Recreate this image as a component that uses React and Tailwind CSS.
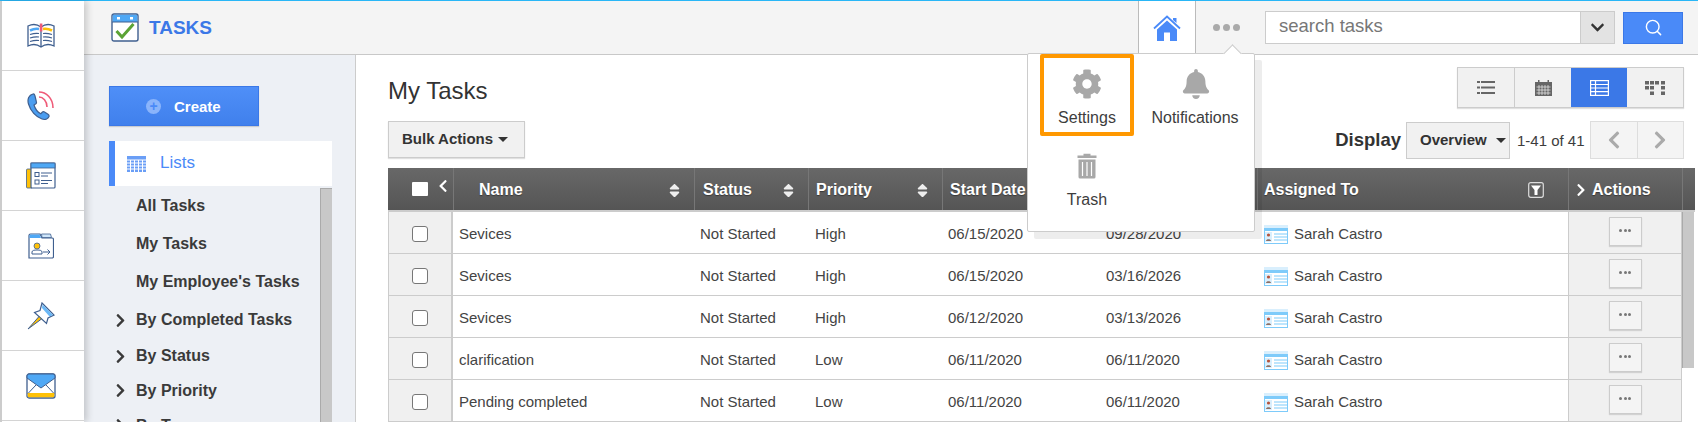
import { FaCog, FaBell, FaChevronDown, FaChevronRight, FaChevronLeft, FaSort } from "react-icons/fa";
import { Search } from "lucide-react";

const navy = "#3f5f8f";
const rowCols = "grid grid-cols-[65px_241px_114px_134px_156px_159px_311px_114px]";
const headCols = "grid grid-cols-[65px_241px_114px_134px_156px_159px_311px_114px_13px]";

const BookIcon = () => (
    <svg width="28" height="25" viewBox="0 0 28 25" fill="none">
        <path d="M14 4C10 1 5 1 1 3V23C5 21 10 21 14 24C18 21 23 21 27 23V3C23 1 18 1 14 4Z" fill="#fff" stroke={navy} strokeWidth="1.3" />
        <path d="M14 4V24" stroke={navy} strokeWidth="1.3" />
        <path d="M3 7.5C6 6 9 5.5 12 6" stroke="#4fa8f5" strokeWidth="2.6" />
        <path d="M16 6C19 5.5 22 6 25 7.5" stroke="#ffc107" strokeWidth="2.6" />
        <path d="M3 11.5C6 10.5 9 10 12 10.5M3 15C6 14 9 13.5 12 14M3 18.5C6 17.5 9 17 12 17.5M16 10.5C19 10 22 10.5 25 11.5M16 14C19 13.5 22 14 25 15M16 17.5C19 17 22 17.5 25 18.5" stroke={navy} strokeWidth="1.2" />
        <rect x="12.8" y="0.5" width="2.6" height="8" fill="#ef5b78" />
    </svg>
);

const PhoneIcon = () => (
    <svg width="28" height="30" viewBox="0 0 28 30" fill="none">
        <path d="M6 3C2 4 0 8 1.5 13C3.5 20 9 26 15 28C18 29 21 28 22 25.5C22.3 24.5 22 24 21 23.3L17.5 21C16.5 20.4 15.8 20.6 15 21.5L13.8 22.8C10.5 21 8 17.5 7 14L8.5 13C9.5 12.3 9.7 11.5 9.3 10.5L8 5C7.6 3.5 7 2.8 6 3Z" fill="#4a9df0" stroke={navy} strokeWidth="1.2" />
        <path d="M12 6C16 6 20 10 20 16" stroke="#ef5b78" strokeWidth="1.6" />
        <path d="M12 1C19 1 26 7 26 17" stroke="#ef5b78" strokeWidth="1.6" />
    </svg>
);

const FormIcon = () => (
    <svg width="30" height="27" viewBox="0 0 30 27" fill="none">
        <rect x="0.5" y="7" width="6" height="19" rx="1" fill="#ffc107" stroke={navy} strokeWidth="0.8" />
        <rect x="5" y="1" width="24" height="25" rx="1" fill="#fff" stroke={navy} strokeWidth="1.2" />
        <rect x="5" y="1" width="24" height="5" fill="#4fa8f5" stroke={navy} strokeWidth="0.8" />
        <rect x="9" y="10.5" width="4" height="4" stroke={navy} strokeWidth="1" />
        <rect x="9" y="18" width="4" height="4" stroke={navy} strokeWidth="1" />
        <path d="M15 11H26M15 14H22M15 18.5H26M15 21.5H22" stroke={navy} strokeWidth="1" />
    </svg>
);

const FolderIcon = () => (
    <svg width="26" height="26" viewBox="0 0 26 26" fill="none">
        <path d="M1 25V2.5A1.5 1.5 0 0 1 2.5 1H12L14 5H24A1.5 1.5 0 0 1 25.5 6.5V23.5A1.5 1.5 0 0 1 24 25Z" fill="#fff" stroke={navy} strokeWidth="1.2" />
        <path d="M1.5 5V2.5A1 1 0 0 1 2.5 1.5H11.5L13 5Z" fill="#4fa8f5" />
        <path d="M14 4.5L13.5 1H22.5L23.5 4.5Z" fill="#cfe6fa" stroke={navy} strokeWidth="0.8" />
        <circle cx="9" cy="13" r="3" fill="#ffc107" stroke={navy} strokeWidth="0.8" />
        <path d="M4 21V19C4 17.5 6 17 9 17C12 17 14 17.5 14 19V21Z" fill="#fff" stroke={navy} strokeWidth="1" />
        <path d="M15 19H22M19.5 16.5L22 19L19.5 21.5" stroke={navy} strokeWidth="1" />
    </svg>
);

const PinIcon = () => (
    <svg width="28" height="28" viewBox="0 0 28 28" fill="none">
        <path d="M15 1L27 13L21 16L19.5 21.5L7.5 10.5L13 8.5Z" fill="#fff" stroke={navy} strokeWidth="1.2" />
        <path d="M15.5 2.5L26 13L22.5 14.5L15 6Z" fill="#6ab8f7" />
        <path d="M1 27L12 14.5L14.5 17Z" fill="#ffc107" stroke={navy} strokeWidth="1" />
    </svg>
);

const MailIcon = () => (
    <svg width="30" height="26" viewBox="0 0 30 26" fill="none">
        <rect x="1" y="1" width="28" height="24" rx="2" fill="#fff" stroke={navy} strokeWidth="1.3" />
        <path d="M1 3A2 2 0 0 1 3 1H27A2 2 0 0 1 29 3V5L15 15L1 5Z" fill="#4fa8f5" stroke={navy} strokeWidth="1" />
        <path d="M1.5 21L10 12M28.5 21L20 12" stroke={navy} strokeWidth="1" />
        <path d="M1.7 20H28.3V23A1.5 1.5 0 0 1 27 24.3H3A1.5 1.5 0 0 1 1.7 23Z" fill="#ffc107" />
    </svg>
);

const TasksIcon = () => (
    <svg width="28" height="29" viewBox="0 0 28 29" fill="none">
        <rect x="1" y="1" width="26" height="27" rx="2" fill="#fff" stroke={navy} strokeWidth="1.4" />
        <path d="M1.7 3A1.3 1.3 0 0 1 3 1.7H25A1.3 1.3 0 0 1 26.3 3V9H1.7Z" fill="#4fa8f5" />
        <path d="M1 9H27" stroke={navy} strokeWidth="1" />
        <rect x="6" y="4" width="3" height="2.5" fill="#fff" />
        <rect x="19" y="4" width="3" height="2.5" fill="#fff" />
        <path d="M5.5 18L11 24L22.5 11" stroke="#5ba335" strokeWidth="3" />
    </svg>
);

const HomeIcon = () => (
    <svg width="28" height="26" viewBox="0 0 28 26" fill="none">
        <path d="M1 13.5L14 1.5L27 13.5" stroke="#4a8af8" strokeWidth="1.8" />
        <path d="M20 3H23.5V8L20 5Z" fill="#4a8af8" />
        <path d="M14 5.5L24 14.5V26H17V17.5H11V26H4V14.5Z" fill="#4a8af8" />
    </svg>
);

const TrashIcon = () => (
    <svg width="20" height="26" viewBox="0 0 20 26">
        <path d="M6.5 2.5V0.8H13.5V2.5H19.5V5H0.5V2.5Z" fill="#a8a8a8" />
        <path d="M1.5 6.5H18.5V24A1.5 1.5 0 0 1 17 25.5H3A1.5 1.5 0 0 1 1.5 24Z" fill="#a8a8a8" />
        <path d="M5.5 9V23M10 9V23M14.5 9V23" stroke="#fff" strokeWidth="1.2" />
    </svg>
);

const ListIcon = () => (
    <svg width="18" height="15" viewBox="0 0 18 15" fill="#666">
        <rect x="0" y="1" width="3" height="2" />
        <rect x="4" y="1" width="14" height="2" />
        <rect x="0" y="6.5" width="3" height="2" />
        <rect x="4" y="6.5" width="14" height="2" />
        <rect x="0" y="12" width="3" height="2" />
        <rect x="4" y="12" width="14" height="2" />
    </svg>
);

const CalendarIcon = () => (
    <svg width="17" height="16" viewBox="0 0 17 16">
        <path d="M0 2H3V0H4.5V2H12.5V0H14V2H17V16H0Z" fill="#666" />
        <path d="M1.5 7H15.5M1.5 10H15.5M1.5 13H15.5M4 5V15M7 5V15M10 5V15M13 5V15" stroke="#f1f1f1" strokeWidth="0.7" />
    </svg>
);

const TableIcon = () => (
    <svg width="19" height="16" viewBox="0 0 19 16" fill="none" stroke="#fff" strokeWidth="1.2">
        <rect x="0.6" y="0.6" width="17.8" height="14.8" />
        <path d="M0.6 4.5H18.4M0.6 8H18.4M0.6 11.7H18.4M5.5 0.6V15.4" />
    </svg>
);

const BlocksIcon = () => (
    <svg width="20" height="14" viewBox="0 0 20 14" fill="#666">
        <rect x="0" y="0" width="4" height="3.5" />
        <rect x="5" y="0" width="4" height="3.5" />
        <rect x="10" y="0" width="4" height="3.5" />
        <rect x="16" y="0" width="4" height="3.5" />
        <rect x="0" y="5" width="4" height="3.5" />
        <rect x="5" y="5" width="4" height="3.5" />
        <rect x="16" y="5" width="4" height="3.5" />
        <rect x="5" y="10.5" width="4" height="3.5" />
        <rect x="16" y="10.5" width="4" height="3.5" />
    </svg>
);

const GridIcon = () => (
    <svg width="19" height="16" viewBox="0 0 19 16">
        <rect width="19" height="16" fill="#6a9ef6" />
        <path d="M0 4H19M0 7H19M0 10H19M0 13H19M3.5 4V16M7.5 4V16M11.5 4V16M15.5 4V16" stroke="#fff" strokeWidth="1" />
    </svg>
);

const CardIcon = () => (
    <svg width="24" height="19" viewBox="0 0 24 19" className="shrink-0">
        <rect width="24" height="3" fill="#d9effd" />
        <rect x="0.5" y="3.5" width="23" height="15" fill="#fff" stroke="#7ecbfa" />
        <rect x="1" y="4" width="22" height="2" fill="#7ecbfa" />
        <rect x="1" y="7" width="7" height="10" fill="#d9effd" />
        <circle cx="4.5" cy="10" r="1.6" fill="#b5533c" />
        <path d="M2 16C2 13.5 7 13.5 7 16Z" fill="#8d6e63" />
        <path d="M10 9H23M10 12H23M10 15H23" stroke="#7ecbfa" strokeWidth="1.2" />
    </svg>
);

const FilterIcon = () => (
    <svg width="16" height="16" viewBox="0 0 16 16">
        <rect x="0.7" y="0.7" width="14.6" height="14.6" rx="2" fill="none" stroke="#ddd" strokeWidth="1.2" />
        <path d="M3 3.5H13L9.5 8V13H6.5V8Z" fill="#fff" />
    </svg>
);

const Caret = ({ className }) => (
    <span className={`inline-block w-0 h-0 border-x-[5px] border-x-transparent border-t-[5px] ${className}`} />
);

const railIcons = [BookIcon, PhoneIcon, FormIcon, FolderIcon, PinIcon, MailIcon];

const sideItems = [
    { label: "All Tasks", h: "h-[38px]" },
    { label: "My Tasks", h: "h-[38px]" },
    { label: "My Employee's Tasks", h: "h-[38px]" },
    { label: "By Completed Tasks", h: "h-[38px]", arrow: true },
    { label: "By Status", h: "h-[34px]", arrow: true },
    { label: "By Priority", h: "h-[35px]", arrow: true },
    { label: "By Type", h: "h-[35px]", arrow: true },
];

const rows = [
    { name: "Sevices", priority: "High", start: "06/15/2020", due: "09/28/2020" },
    { name: "Sevices", priority: "High", start: "06/15/2020", due: "03/16/2026" },
    { name: "Sevices", priority: "High", start: "06/12/2020", due: "03/13/2026" },
    { name: "clarification", priority: "Low", start: "06/11/2020", due: "06/11/2020" },
    { name: "Pending completed", priority: "Low", start: "06/11/2020", due: "06/11/2020" },
];

const headCell = "flex items-center border-l border-[#777] pt-[2px] text-[16px] font-bold text-white [text-shadow:0_1px_1px_rgba(0,0,0,0.4)]";

const App = () => {
    return (
        <div className="relative flex flex-col w-[1698px] h-[422px] overflow-hidden bg-white font-['Liberation_Sans',Arial,sans-serif] text-[#3d3d3d]">
            <div className="h-px shrink-0 bg-[#29b6f6]" />
            <div className="flex flex-1 min-h-0">
                <div className="relative z-10 w-[84px] shrink-0 border-l-2 border-[#ccc] bg-white shadow-[3px_0_7px_rgba(0,0,0,0.18)]">
                    {railIcons.map((Icon, i) => (
                        <div key={i} className="flex h-[70px] items-center justify-center border-b border-[#d4d4d4] pr-1">
                            <Icon />
                        </div>
                    ))}
                </div>

                <div className="flex flex-1 min-w-0 flex-col">
                    <div className="flex h-[54px] shrink-0 items-center border-b border-[#c8c8c8] bg-[#f4f4f4] pl-[27px] pr-[15px]">
                        <TasksIcon />
                        <span className="ml-[10px] pt-[2px] text-[19px] font-bold text-[#3b78e7]">TASKS</span>
                        <div className="ml-auto flex h-full w-[58px] items-center justify-center border-x border-[#bbb] bg-white">
                            <HomeIcon />
                        </div>
                        <div className="flex h-full w-[60px] items-center justify-center gap-[3px]">
                            <span className="h-[7px] w-[7px] rounded-full bg-[#aaa]" />
                            <span className="h-[7px] w-[7px] rounded-full bg-[#aaa]" />
                            <span className="h-[7px] w-[7px] rounded-full bg-[#aaa]" />
                        </div>
                        <div className="ml-[9px] flex h-[33px] w-[350px] border border-[#ccc] bg-white">
                            <div className="flex-1 pl-[13px] text-[18.5px] leading-[27px] text-[#777]">search tasks</div>
                            <div className="flex w-[34px] items-center justify-center border-l border-[#ccc] bg-[#e3e3e3] text-[#333]">
                                <FaChevronDown size={15} />
                            </div>
                        </div>
                        <div className="ml-2 flex h-[32px] w-[60px] items-center justify-center border border-[#3b78e7] bg-[#4a8af8] text-white">
                            <Search size={19} strokeWidth={1.8} />
                        </div>
                    </div>

                    <div className="flex flex-1 min-h-0">
                        <div className="w-[272px] shrink-0 border-r border-[#ccc] bg-[#edf0f5] pl-[25px] pt-[31px]">
                            <div className="flex h-[40px] w-[150px] items-center border border-[#3b78e7] bg-gradient-to-b from-[#4f8ff8] to-[#4080ec] pl-[36px] text-[15px] font-bold text-white shadow-[0_1px_1px_rgba(0,0,0,0.15)]">
                                <span className="flex h-[15px] w-[15px] items-center justify-center rounded-full bg-[#8ab4fb] text-[14px] leading-none font-bold text-[#4a8af8]">+</span>
                                <span className="ml-[13px] pt-[2px]">Create</span>
                            </div>
                            <div className="mt-[15px] flex h-[45px] w-[223px] items-center border-l-[6px] border-[#4a8af8] bg-white pl-[12px] text-[17px] text-[#4a8af8]">
                                <GridIcon />
                                <span className="ml-[14px] pb-[2px]">Lists</span>
                            </div>
                            <div className="flex w-[223px]">
                                <ul className="flex-1 pt-px text-[16px] font-bold text-[#3a3a3a]">
                                    {sideItems.map((item) => (
                                        <li key={item.label} className={`flex items-center ${item.h}`}>
                                            <span className="flex w-[27px] justify-end pr-[8px]">
                                                {item.arrow && <FaChevronRight size={15} />}
                                            </span>
                                            {item.label}
                                        </li>
                                    ))}
                                </ul>
                                <div className="mt-[2px] w-[12px] border-l border-t border-[#aaa] bg-[#c8c8c8]" />
                            </div>
                        </div>

                        <div className="flex flex-1 min-w-0 flex-col">
                            <div className="flex h-[113px] shrink-0 justify-between pl-[32px] pr-[14px]">
                                <div className="pt-[22px]">
                                    <h1 className="text-[24px] leading-[28px] text-[#333]">My Tasks</h1>
                                    <button className="mt-[16px] flex h-[37px] w-[137px] items-center gap-[5px] border border-[#ccc] bg-[#f1f1f1] pl-[13px] text-[15px] font-bold text-[#333] shadow-[0_1px_1px_rgba(0,0,0,0.12)]">
                                        Bulk Actions
                                        <Caret className="border-t-[#333]" />
                                    </button>
                                </div>
                                <div className="flex flex-col items-end pt-[12px]">
                                    <div className="flex h-[41px] w-[227px] border border-[#ccc] bg-[#f1f1f1] shadow-[0_1px_1px_rgba(0,0,0,0.12)]">
                                        <div className="flex flex-1 items-center justify-center border-r border-[#ccc]"><ListIcon /></div>
                                        <div className="flex flex-1 items-center justify-center"><CalendarIcon /></div>
                                        <div className="flex flex-1 items-center justify-center bg-[#3b78e7]"><TableIcon /></div>
                                        <div className="flex flex-1 items-center justify-center"><BlocksIcon /></div>
                                    </div>
                                    <div className="mt-[13px] flex h-[38px] items-center">
                                        <span className="text-[18.5px] font-bold text-[#333]">Display</span>
                                        <button className="ml-[5px] flex h-[37px] w-[104px] items-center gap-[9px] border border-[#ccc] bg-[#f1f1f1] pl-[13px] text-[15px] font-bold text-[#333]">
                                            Overview
                                            <Caret className="border-t-[#333]" />
                                        </button>
                                        <span className="ml-[7px] w-[73px] pt-[2px] text-[15px]">1-41 of 41</span>
                                        <div className="flex h-[38px] w-[94px] border border-[#ddd] bg-[#f4f4f4] text-[#aaa]">
                                            <div className="flex flex-1 items-center justify-center border-r border-[#ddd]"><FaChevronLeft size={20} /></div>
                                            <div className="flex flex-1 items-center justify-center"><FaChevronRight size={20} /></div>
                                        </div>
                                    </div>
                                </div>
                            </div>

                            <div className="ml-[32px] w-[1307px]">
                                <div className={`${headCols} h-[44px] w-full border-b-2 border-[#ccc] bg-gradient-to-b from-[#686868] to-[#555]`}>
                                    <div className="flex items-center pl-[24px] text-white">
                                        <span className="h-[14px] w-[16px] rounded-[1px] bg-white" />
                                        <FaChevronLeft size={14} className="ml-[8px] -mt-[6px]" />
                                    </div>
                                    <div className={`${headCell} justify-between pl-[25px] pr-[11px]`}>
                                        Name
                                        <FaSort size={17} className="text-[#eee]" />
                                    </div>
                                    <div className={`${headCell} justify-between pl-[8px] pr-[11px]`}>
                                        Status
                                        <FaSort size={17} className="text-[#eee]" />
                                    </div>
                                    <div className={`${headCell} justify-between pl-[7px] pr-[11px]`}>
                                        Priority
                                        <FaSort size={17} className="text-[#eee]" />
                                    </div>
                                    <div className={`${headCell} pl-[7px]`}>Start Date</div>
                                    <div className={headCell} />
                                    <div className={`${headCell} justify-between pl-[6px] pr-[24px]`}>
                                        Assigned To
                                        <FilterIcon />
                                    </div>
                                    <div className={`${headCell} pl-[5px]`}>
                                        <FaChevronRight size={14} />
                                        <span className="ml-[4px]">Actions</span>
                                    </div>
                                    <div className={headCell} />
                                </div>

                                <div className="flex">
                                    <div className="w-[1294px] shrink-0">
                                        {rows.map((row, i) => (
                                            <div key={i} className={`${rowCols} h-[42px] items-center border-b border-[#ccc] text-[15px] text-[#444]`}>
                                                <div className="flex h-full items-center border-x border-r-2 border-[#ccc] bg-[#f0f0f0] pl-[23px] pt-[2px]">
                                                    <span className="h-[16px] w-[16px] rounded-[3px] border border-[#777] bg-white" />
                                                </div>
                                                <div className="pl-[6px] pt-[3px]">{row.name}</div>
                                                <div className="pl-[6px] pt-[3px]">Not Started</div>
                                                <div className="pl-[7px] pt-[3px]">{row.priority}</div>
                                                <div className="pl-[6px] pt-[3px]">{row.start}</div>
                                                <div className="pl-[8px] pt-[3px]">{row.due}</div>
                                                <div className="flex items-center pl-[7px] pt-[3px]">
                                                    <CardIcon />
                                                    <span className="ml-[6px]">Sarah Castro</span>
                                                </div>
                                                <div className="flex h-full items-center justify-center border-x border-[#ccc] bg-[#f0f0f0] pb-[2px]">
                                                    <button className="flex h-[29px] w-[33px] items-center justify-center gap-[1.5px] border border-[#ccc] bg-[#f4f4f4] pb-[3px] shadow-[0_1px_1px_rgba(0,0,0,0.12)]">
                                                        <span className="h-[3px] w-[3px] rounded-full bg-[#777]" />
                                                        <span className="h-[3px] w-[3px] rounded-full bg-[#777]" />
                                                        <span className="h-[3px] w-[3px] rounded-full bg-[#777]" />
                                                    </button>
                                                </div>
                                            </div>
                                        ))}
                                    </div>
                                    <div className="h-[156px] w-[12px] border-l border-[#aaa] bg-[#c8c8c8]" />
                                </div>
                            </div>
                        </div>
                    </div>
                </div>
            </div>

            <div className="absolute left-[1027px] top-[53px] z-20 h-[179px] w-[228px] rounded-[2px] border border-[#ccc] bg-white shadow-[7px_7px_0_rgba(0,0,0,0.07)]">
                <div className="absolute -top-[7px] right-[15px] h-[13px] w-[13px] rotate-45 border-l border-t border-[#ccc] bg-white" />
                <div className="relative grid grid-cols-[94px_94px] gap-x-[14px] pl-[12px]">
                    <div className="flex h-[82px] flex-col items-center rounded-[2px] border-4 border-[#ff9800] pt-[11px] text-[16px]">
                        <FaCog size={30} className="text-[#a8a8a8]" />
                        <span className="mt-[7px]">Settings</span>
                    </div>
                    <div className="flex h-[82px] flex-col items-center pt-[15px] text-[16px]">
                        <FaBell size={30} className="ml-[2px] text-[#a8a8a8]" />
                        <span className="mt-[7px] whitespace-nowrap">Notifications</span>
                    </div>
                    <div className="flex flex-col items-center pt-[17px] text-[16px]">
                        <TrashIcon />
                        <span className="mt-[9px]">Trash</span>
                    </div>
                </div>
            </div>
        </div>
    );
};

export default App;
